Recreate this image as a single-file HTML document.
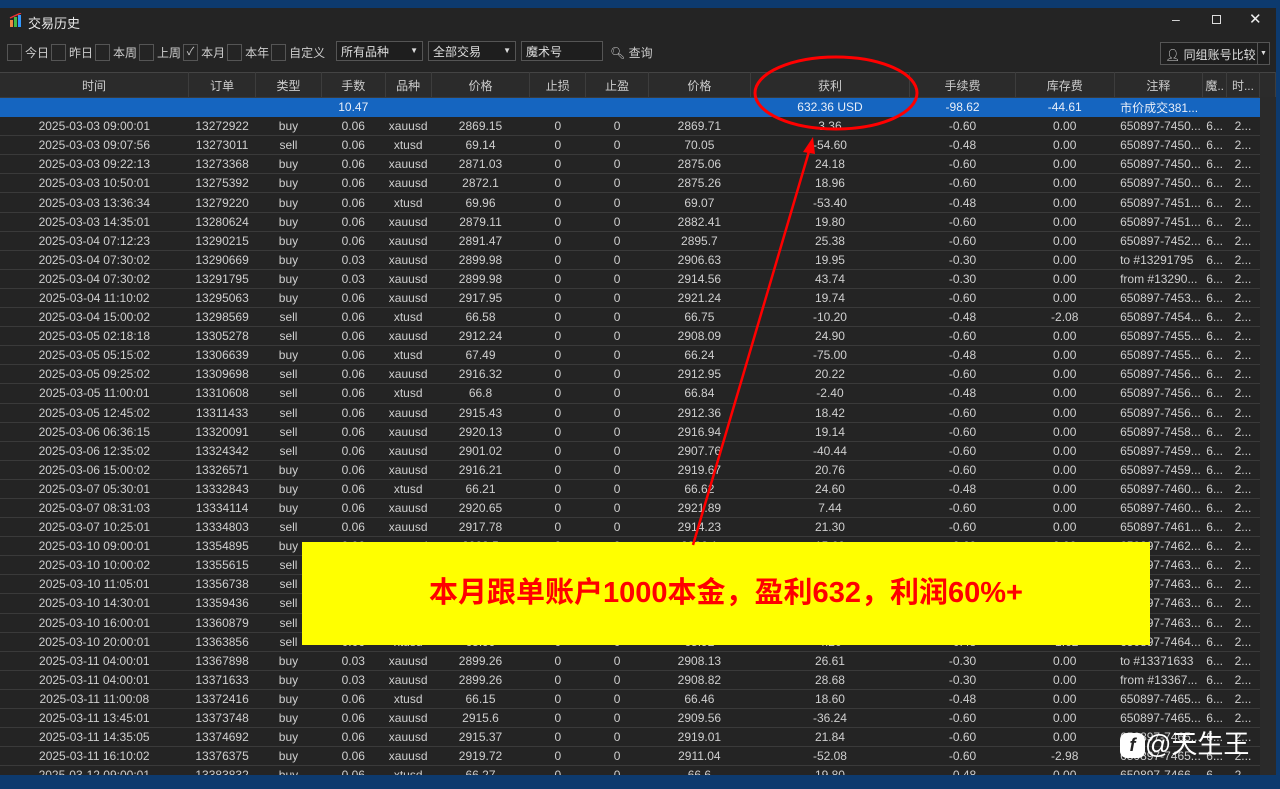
<!DOCTYPE html>
<html><head><meta charset="utf-8"><style>
*{margin:0;padding:0;box-sizing:border-box}
body{width:1280px;height:789px;overflow:hidden;background:#0d3a6e;font-family:"Liberation Sans","Noto Sans CJK SC",sans-serif;font-size:12px;color:#cfcfcf;position:relative}
.win{position:absolute;left:0;top:8px;width:1276px;height:767px;background:#242424;overflow:hidden}
.title{position:absolute;left:28px;top:5px;font-size:13px;color:#e8e8e8}
.tb{position:absolute;top:34px;height:20px;display:flex;align-items:center;font-size:12px;color:#ccc}
.cb{display:inline-block;width:15px;height:17px;border:1px solid #555;margin:0 3px 0 0;vertical-align:middle;text-align:center;line-height:14px;font-size:11px}
.sel{position:absolute;top:33px;height:20px;border:1px solid #555;background:#1e1e1e;padding:1px 4px;color:#ddd;white-space:nowrap}
table{position:absolute;left:0;top:64px;border-collapse:collapse;table-layout:fixed}
td,th{height:19.1px;text-align:center;white-space:nowrap;overflow:hidden;font-weight:normal;border-bottom:1px solid #3a3a3a;padding:0 2px}
th{height:25px;background:#2b2b2b;border-right:1px solid #3d3d3d;border-top:1px solid #444;color:#ccc}
tr.tot td{background:#1565c0;color:#e8eef8;border-bottom:1px solid #1565c0}
.l{text-align:left;padding-left:6px}
.sb{position:absolute;left:1260px;top:89px;width:16px;height:680px;background:#2a2a2a}
</style></head><body>
<div class="win">
<svg style="position:absolute;left:9px;top:5px" width="14" height="14"><rect x="1" y="7" width="3" height="7" fill="#e84"/><rect x="5" y="4" width="3" height="10" fill="#4b4"/><rect x="9" y="2" width="3" height="12" fill="#39f"/><path d="M1 5 L12 0" stroke="#e33" stroke-width="1.5"/></svg>
<div class="title">交易历史</div>
<div style="position:absolute;left:1172px;top:3px;color:#ddd;font-size:14px">–</div>
<div style="position:absolute;left:1212px;top:7px;width:9px;height:9px;border:1px solid #ddd"></div>
<div style="position:absolute;left:1249px;top:2px;color:#eee;font-size:15px">✕</div>
<div class="tb" style="left:7px"><span class="cb"></span>今日<span class="cb" style="margin-left:2px"></span>昨日<span class="cb" style="margin-left:2px"></span>本周<span class="cb" style="margin-left:2px"></span>上周<span class="cb" style="margin-left:2px">✓</span>本月<span class="cb" style="margin-left:2px"></span>本年<span class="cb" style="margin-left:2px"></span>自定义</div>
<div class="sel" style="left:336px;width:87px">所有品种<span style="float:right;font-size:8px;line-height:16px">▼</span></div>
<div class="sel" style="left:428px;width:88px">全部交易<span style="float:right;font-size:8px;line-height:16px">▼</span></div>
<div class="sel" style="left:521px;width:82px">魔术号</div>
<div class="tb" style="left:610px">🔍︎ 查询</div>
<div class="sel" style="left:1160px;top:34px;width:110px;height:23px;padding:3px 0 0 4px;font-size:12px">👤︎ 同组账号比较<span style="position:absolute;right:0;top:0;width:12px;height:21px;border-left:1px solid #555;font-size:7px;text-align:center;line-height:21px">▼</span></div>
<table>
<colgroup><col style="width:189px"><col style="width:67px"><col style="width:66px"><col style="width:64px"><col style="width:46px"><col style="width:99px"><col style="width:56px"><col style="width:63px"><col style="width:102px"><col style="width:160px"><col style="width:106px"><col style="width:99px"><col style="width:88px"><col style="width:22px"><col style="width:33px"><col style="width:16px"></colgroup>
<tr><th>时间</th><th>订单</th><th>类型</th><th>手数</th><th>品种</th><th>价格</th><th>止损</th><th>止盈</th><th>价格</th><th>获利</th><th>手续费</th><th>库存费</th><th>注释</th><th>魔..</th><th>时...</th><th></th></tr>
<tr class="tot"><td></td><td></td><td></td><td>10.47</td><td></td><td></td><td></td><td></td><td></td><td>632.36 USD</td><td>-98.62</td><td>-44.61</td><td class="l">市价成交381...</td><td></td><td></td><td></td></tr>
<tr><td>2025-03-03 09:00:01</td><td>13272922</td><td>buy</td><td>0.06</td><td>xauusd</td><td>2869.15</td><td>0</td><td>0</td><td>2869.71</td><td>3.36</td><td>-0.60</td><td>0.00</td><td class="l">650897-7450...</td><td>6...</td><td>2...</td><td></td></tr>
<tr><td>2025-03-03 09:07:56</td><td>13273011</td><td>sell</td><td>0.06</td><td>xtusd</td><td>69.14</td><td>0</td><td>0</td><td>70.05</td><td>-54.60</td><td>-0.48</td><td>0.00</td><td class="l">650897-7450...</td><td>6...</td><td>2...</td><td></td></tr>
<tr><td>2025-03-03 09:22:13</td><td>13273368</td><td>buy</td><td>0.06</td><td>xauusd</td><td>2871.03</td><td>0</td><td>0</td><td>2875.06</td><td>24.18</td><td>-0.60</td><td>0.00</td><td class="l">650897-7450...</td><td>6...</td><td>2...</td><td></td></tr>
<tr><td>2025-03-03 10:50:01</td><td>13275392</td><td>buy</td><td>0.06</td><td>xauusd</td><td>2872.1</td><td>0</td><td>0</td><td>2875.26</td><td>18.96</td><td>-0.60</td><td>0.00</td><td class="l">650897-7450...</td><td>6...</td><td>2...</td><td></td></tr>
<tr><td>2025-03-03 13:36:34</td><td>13279220</td><td>buy</td><td>0.06</td><td>xtusd</td><td>69.96</td><td>0</td><td>0</td><td>69.07</td><td>-53.40</td><td>-0.48</td><td>0.00</td><td class="l">650897-7451...</td><td>6...</td><td>2...</td><td></td></tr>
<tr><td>2025-03-03 14:35:01</td><td>13280624</td><td>buy</td><td>0.06</td><td>xauusd</td><td>2879.11</td><td>0</td><td>0</td><td>2882.41</td><td>19.80</td><td>-0.60</td><td>0.00</td><td class="l">650897-7451...</td><td>6...</td><td>2...</td><td></td></tr>
<tr><td>2025-03-04 07:12:23</td><td>13290215</td><td>buy</td><td>0.06</td><td>xauusd</td><td>2891.47</td><td>0</td><td>0</td><td>2895.7</td><td>25.38</td><td>-0.60</td><td>0.00</td><td class="l">650897-7452...</td><td>6...</td><td>2...</td><td></td></tr>
<tr><td>2025-03-04 07:30:02</td><td>13290669</td><td>buy</td><td>0.03</td><td>xauusd</td><td>2899.98</td><td>0</td><td>0</td><td>2906.63</td><td>19.95</td><td>-0.30</td><td>0.00</td><td class="l">to #13291795</td><td>6...</td><td>2...</td><td></td></tr>
<tr><td>2025-03-04 07:30:02</td><td>13291795</td><td>buy</td><td>0.03</td><td>xauusd</td><td>2899.98</td><td>0</td><td>0</td><td>2914.56</td><td>43.74</td><td>-0.30</td><td>0.00</td><td class="l">from #13290...</td><td>6...</td><td>2...</td><td></td></tr>
<tr><td>2025-03-04 11:10:02</td><td>13295063</td><td>buy</td><td>0.06</td><td>xauusd</td><td>2917.95</td><td>0</td><td>0</td><td>2921.24</td><td>19.74</td><td>-0.60</td><td>0.00</td><td class="l">650897-7453...</td><td>6...</td><td>2...</td><td></td></tr>
<tr><td>2025-03-04 15:00:02</td><td>13298569</td><td>sell</td><td>0.06</td><td>xtusd</td><td>66.58</td><td>0</td><td>0</td><td>66.75</td><td>-10.20</td><td>-0.48</td><td>-2.08</td><td class="l">650897-7454...</td><td>6...</td><td>2...</td><td></td></tr>
<tr><td>2025-03-05 02:18:18</td><td>13305278</td><td>sell</td><td>0.06</td><td>xauusd</td><td>2912.24</td><td>0</td><td>0</td><td>2908.09</td><td>24.90</td><td>-0.60</td><td>0.00</td><td class="l">650897-7455...</td><td>6...</td><td>2...</td><td></td></tr>
<tr><td>2025-03-05 05:15:02</td><td>13306639</td><td>buy</td><td>0.06</td><td>xtusd</td><td>67.49</td><td>0</td><td>0</td><td>66.24</td><td>-75.00</td><td>-0.48</td><td>0.00</td><td class="l">650897-7455...</td><td>6...</td><td>2...</td><td></td></tr>
<tr><td>2025-03-05 09:25:02</td><td>13309698</td><td>sell</td><td>0.06</td><td>xauusd</td><td>2916.32</td><td>0</td><td>0</td><td>2912.95</td><td>20.22</td><td>-0.60</td><td>0.00</td><td class="l">650897-7456...</td><td>6...</td><td>2...</td><td></td></tr>
<tr><td>2025-03-05 11:00:01</td><td>13310608</td><td>sell</td><td>0.06</td><td>xtusd</td><td>66.8</td><td>0</td><td>0</td><td>66.84</td><td>-2.40</td><td>-0.48</td><td>0.00</td><td class="l">650897-7456...</td><td>6...</td><td>2...</td><td></td></tr>
<tr><td>2025-03-05 12:45:02</td><td>13311433</td><td>sell</td><td>0.06</td><td>xauusd</td><td>2915.43</td><td>0</td><td>0</td><td>2912.36</td><td>18.42</td><td>-0.60</td><td>0.00</td><td class="l">650897-7456...</td><td>6...</td><td>2...</td><td></td></tr>
<tr><td>2025-03-06 06:36:15</td><td>13320091</td><td>sell</td><td>0.06</td><td>xauusd</td><td>2920.13</td><td>0</td><td>0</td><td>2916.94</td><td>19.14</td><td>-0.60</td><td>0.00</td><td class="l">650897-7458...</td><td>6...</td><td>2...</td><td></td></tr>
<tr><td>2025-03-06 12:35:02</td><td>13324342</td><td>sell</td><td>0.06</td><td>xauusd</td><td>2901.02</td><td>0</td><td>0</td><td>2907.76</td><td>-40.44</td><td>-0.60</td><td>0.00</td><td class="l">650897-7459...</td><td>6...</td><td>2...</td><td></td></tr>
<tr><td>2025-03-06 15:00:02</td><td>13326571</td><td>buy</td><td>0.06</td><td>xauusd</td><td>2916.21</td><td>0</td><td>0</td><td>2919.67</td><td>20.76</td><td>-0.60</td><td>0.00</td><td class="l">650897-7459...</td><td>6...</td><td>2...</td><td></td></tr>
<tr><td>2025-03-07 05:30:01</td><td>13332843</td><td>buy</td><td>0.06</td><td>xtusd</td><td>66.21</td><td>0</td><td>0</td><td>66.62</td><td>24.60</td><td>-0.48</td><td>0.00</td><td class="l">650897-7460...</td><td>6...</td><td>2...</td><td></td></tr>
<tr><td>2025-03-07 08:31:03</td><td>13334114</td><td>buy</td><td>0.06</td><td>xauusd</td><td>2920.65</td><td>0</td><td>0</td><td>2921.89</td><td>7.44</td><td>-0.60</td><td>0.00</td><td class="l">650897-7460...</td><td>6...</td><td>2...</td><td></td></tr>
<tr><td>2025-03-07 10:25:01</td><td>13334803</td><td>sell</td><td>0.06</td><td>xauusd</td><td>2917.78</td><td>0</td><td>0</td><td>2914.23</td><td>21.30</td><td>-0.60</td><td>0.00</td><td class="l">650897-7461...</td><td>6...</td><td>2...</td><td></td></tr>
<tr><td>2025-03-10 09:00:01</td><td>13354895</td><td>buy</td><td>0.06</td><td>xauusd</td><td>2903.5</td><td>0</td><td>0</td><td>2906.1</td><td>15.60</td><td>-0.60</td><td>0.00</td><td class="l">650897-7462...</td><td>6...</td><td>2...</td><td></td></tr>
<tr><td>2025-03-10 10:00:02</td><td>13355615</td><td>sell</td><td>0.06</td><td>xauusd</td><td>2905.1</td><td>0</td><td>0</td><td>2902.3</td><td>16.80</td><td>-0.60</td><td>0.00</td><td class="l">650897-7463...</td><td>6...</td><td>2...</td><td></td></tr>
<tr><td>2025-03-10 11:05:01</td><td>13356738</td><td>sell</td><td>0.06</td><td>xauusd</td><td>2901.4</td><td>0</td><td>0</td><td>2898.2</td><td>19.20</td><td>-0.60</td><td>0.00</td><td class="l">650897-7463...</td><td>6...</td><td>2...</td><td></td></tr>
<tr><td>2025-03-10 14:30:01</td><td>13359436</td><td>sell</td><td>0.06</td><td>xauusd</td><td>2898.7</td><td>0</td><td>0</td><td>2895.1</td><td>21.60</td><td>-0.60</td><td>0.00</td><td class="l">650897-7463...</td><td>6...</td><td>2...</td><td></td></tr>
<tr><td>2025-03-10 16:00:01</td><td>13360879</td><td>sell</td><td>0.06</td><td>xauusd</td><td>2894.3</td><td>0</td><td>0</td><td>2890.9</td><td>20.40</td><td>-0.60</td><td>0.00</td><td class="l">650897-7463...</td><td>6...</td><td>2...</td><td></td></tr>
<tr><td>2025-03-10 20:00:01</td><td>13363856</td><td>sell</td><td>0.06</td><td>xtusd</td><td>65.99</td><td>0</td><td>0</td><td>65.92</td><td>4.20</td><td>-0.48</td><td>-1.62</td><td class="l">650897-7464...</td><td>6...</td><td>2...</td><td></td></tr>
<tr><td>2025-03-11 04:00:01</td><td>13367898</td><td>buy</td><td>0.03</td><td>xauusd</td><td>2899.26</td><td>0</td><td>0</td><td>2908.13</td><td>26.61</td><td>-0.30</td><td>0.00</td><td class="l">to #13371633</td><td>6...</td><td>2...</td><td></td></tr>
<tr><td>2025-03-11 04:00:01</td><td>13371633</td><td>buy</td><td>0.03</td><td>xauusd</td><td>2899.26</td><td>0</td><td>0</td><td>2908.82</td><td>28.68</td><td>-0.30</td><td>0.00</td><td class="l">from #13367...</td><td>6...</td><td>2...</td><td></td></tr>
<tr><td>2025-03-11 11:00:08</td><td>13372416</td><td>buy</td><td>0.06</td><td>xtusd</td><td>66.15</td><td>0</td><td>0</td><td>66.46</td><td>18.60</td><td>-0.48</td><td>0.00</td><td class="l">650897-7465...</td><td>6...</td><td>2...</td><td></td></tr>
<tr><td>2025-03-11 13:45:01</td><td>13373748</td><td>buy</td><td>0.06</td><td>xauusd</td><td>2915.6</td><td>0</td><td>0</td><td>2909.56</td><td>-36.24</td><td>-0.60</td><td>0.00</td><td class="l">650897-7465...</td><td>6...</td><td>2...</td><td></td></tr>
<tr><td>2025-03-11 14:35:05</td><td>13374692</td><td>buy</td><td>0.06</td><td>xauusd</td><td>2915.37</td><td>0</td><td>0</td><td>2919.01</td><td>21.84</td><td>-0.60</td><td>0.00</td><td class="l">650897-7465...</td><td>6...</td><td>2...</td><td></td></tr>
<tr><td>2025-03-11 16:10:02</td><td>13376375</td><td>buy</td><td>0.06</td><td>xauusd</td><td>2919.72</td><td>0</td><td>0</td><td>2911.04</td><td>-52.08</td><td>-0.60</td><td>-2.98</td><td class="l">650897-7465...</td><td>6...</td><td>2...</td><td></td></tr>
<tr><td>2025-03-12 09:00:01</td><td>13383832</td><td>buy</td><td>0.06</td><td>xtusd</td><td>66.27</td><td>0</td><td>0</td><td>66.6</td><td>19.80</td><td>-0.48</td><td>0.00</td><td class="l">650897-7466...</td><td>6...</td><td>2...</td><td></td></tr>
</table>
<div class="sb"></div>
</div>
<div style="position:absolute;left:302px;top:542px;width:848px;height:103px;background:#ffff00;color:#f00;font-size:29px;font-weight:bold;text-align:center;line-height:103px;font-family:'Liberation Sans','Noto Sans CJK SC',sans-serif">本月跟单账户1000本金，盈利632，利润60%+</div>
<svg style="position:absolute;left:0;top:0" width="1280" height="789">
<ellipse cx="836" cy="93" rx="81" ry="36" fill="none" stroke="#f00" stroke-width="3"/>
<line x1="693" y1="545" x2="810" y2="148" stroke="#f00" stroke-width="2.5"/>
<polygon points="813,137 803,152 815,154" fill="#f00"/>
</svg>
<div style="position:absolute;left:1120px;top:724px;color:#fff;font-size:26px;font-family:'Liberation Sans','Noto Sans CJK SC',sans-serif"><span style="display:inline-block;width:25px;height:25px;background:#fff;border-radius:7px;color:#222;font-size:18px;text-align:center;line-height:25px;font-weight:bold;font-style:italic;vertical-align:2px">f</span>@天生王</div>
</body></html>
